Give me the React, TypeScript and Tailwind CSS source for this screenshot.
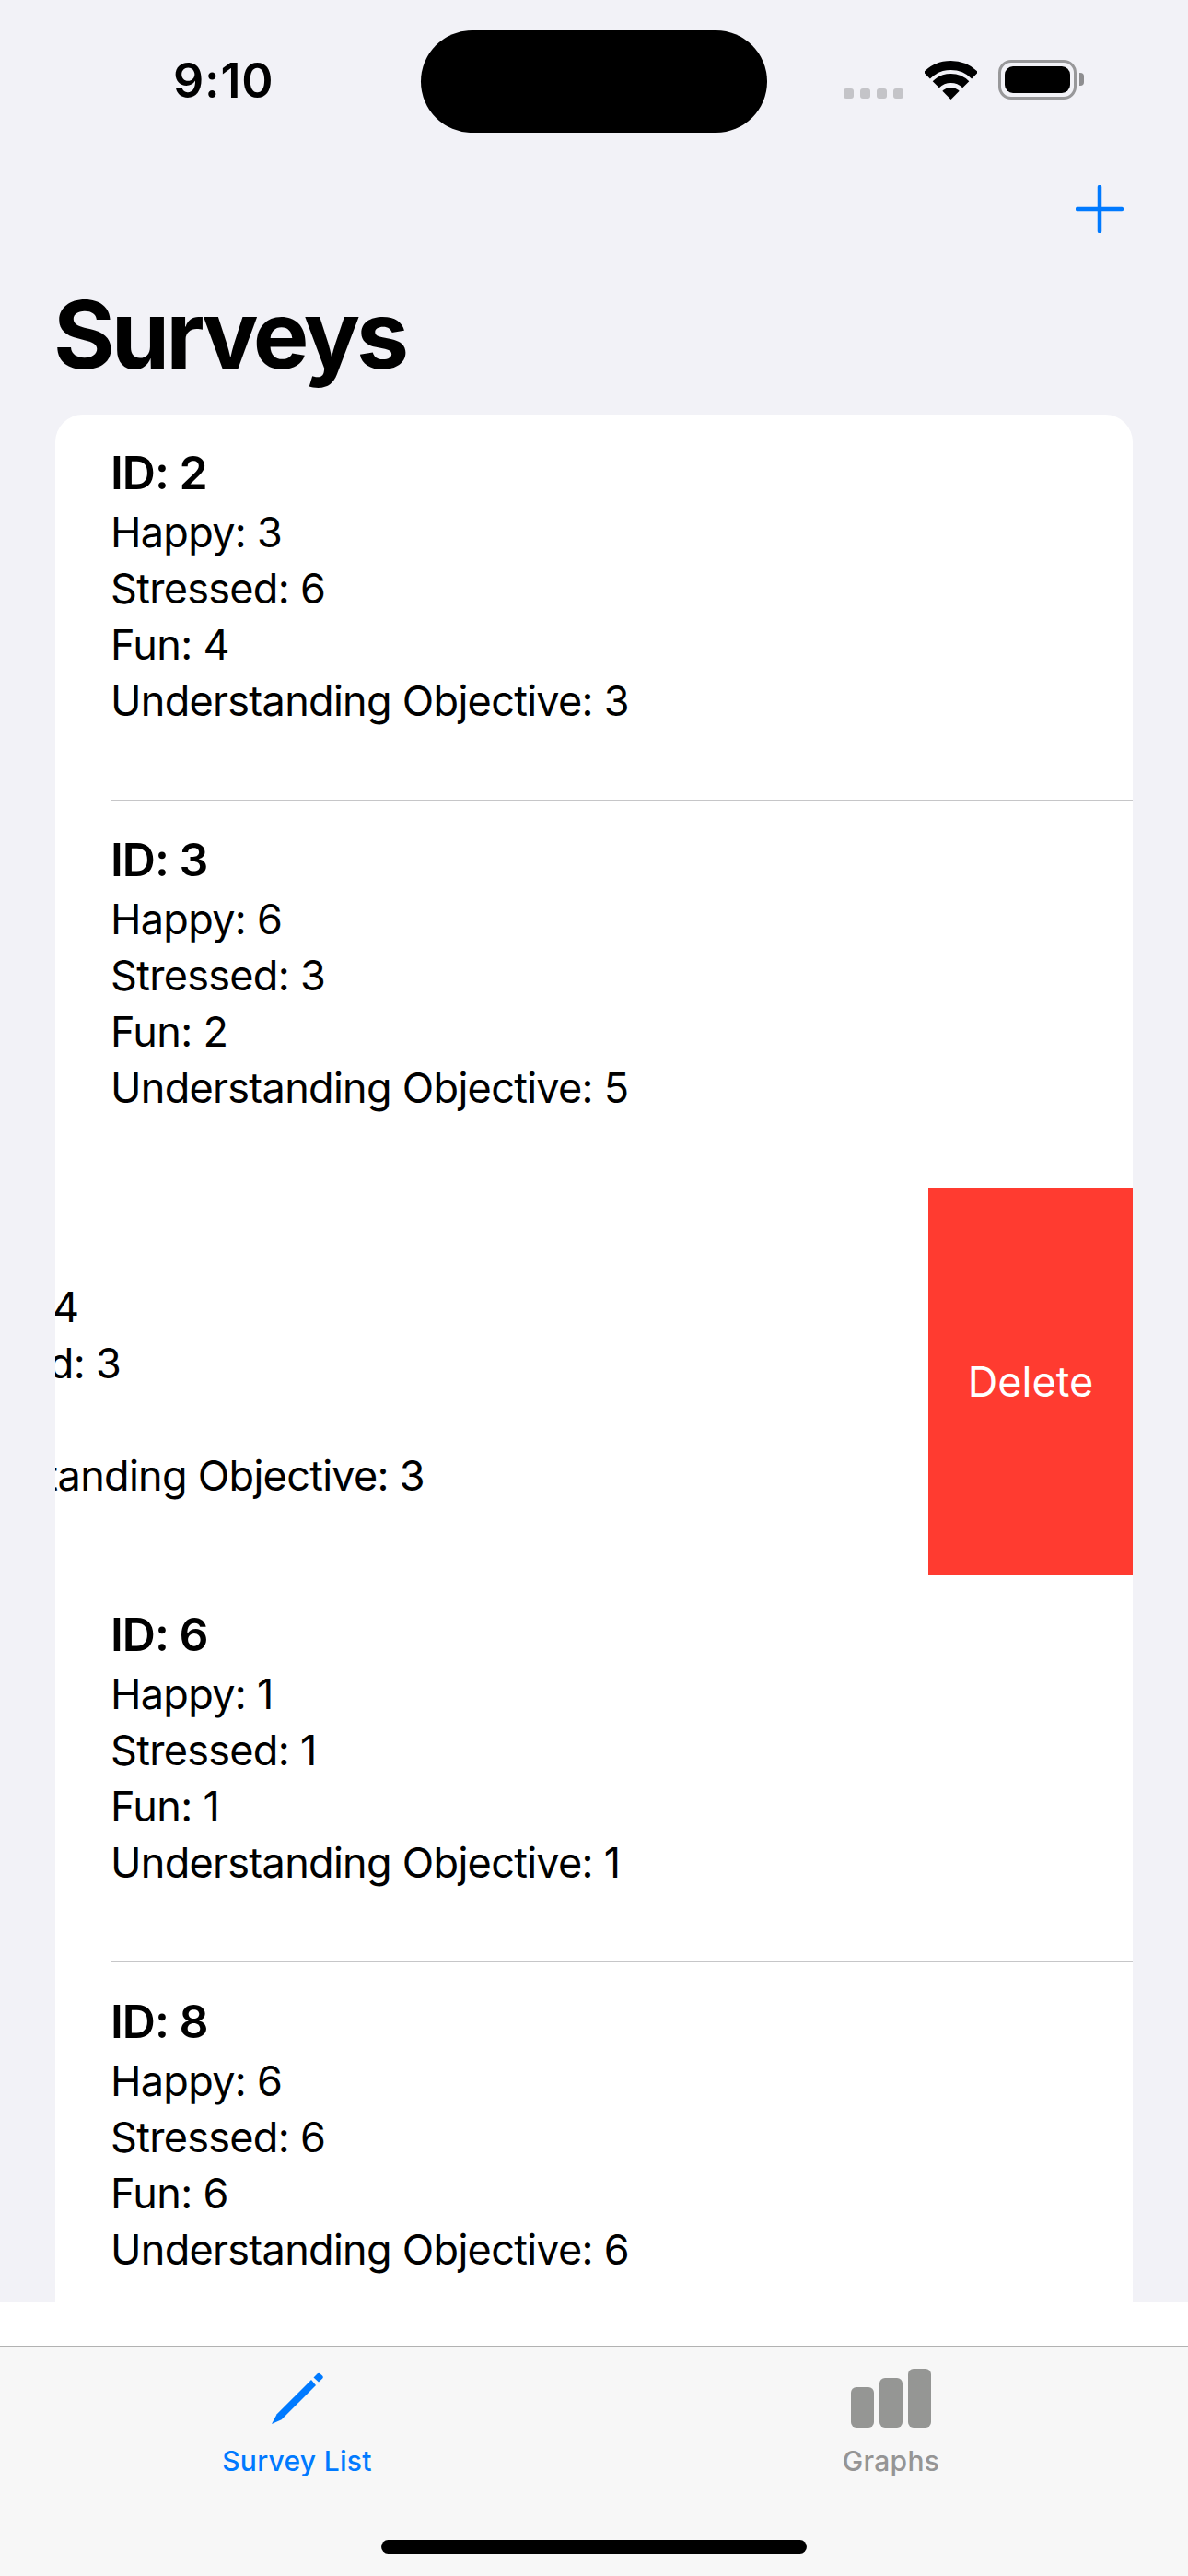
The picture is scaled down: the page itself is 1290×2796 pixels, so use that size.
const sans = "font-['Inter','Liberation_Sans',sans-serif]";

type Survey = {
  id: number;
  happy: number;
  stressed: number;
  fun: number;
  objective: number;
};

const surveys: Survey[] = [
  { id: 2, happy: 3, stressed: 6, fun: 4, objective: 3 },
  { id: 3, happy: 6, stressed: 3, fun: 2, objective: 5 },
  { id: 4, happy: 4, stressed: 3, fun: 3, objective: 3 },
  { id: 6, happy: 1, stressed: 1, fun: 1, objective: 1 },
  { id: 8, happy: 6, stressed: 6, fun: 6, objective: 6 },
];

function StatusBar() {
  return (
    <div className="flex h-[144px] shrink-0 items-start pl-[188px] pt-[33px]">
      <div className="w-[269px] pt-[24px] text-[52px] leading-[62px] font-semibold tracking-[0.8px] text-black">9:10</div>
      <div className="h-[111px] w-[376px] rounded-full bg-black" />
      <div className="ml-[83px] flex h-[75px] items-end">
        <div className="flex gap-[7px] pb-px">
          {[0, 1, 2, 3].map((dot) => (
            <span key={dot} className="h-[11px] w-[11px] rounded-[3px] bg-[#c4c4c8]" />
          ))}
        </div>
        <svg className="ml-[23px]" width="57" height="42" viewBox="0 0 57 42">
          <path d="M2.34 15.84A37 37 0 0 1 54.66 15.84" fill="none" stroke="#000" strokeWidth="10" />
          <path d="M12.24 25.74A23 23 0 0 1 44.76 25.74" fill="none" stroke="#000" strokeWidth="10" />
          <path d="M28.5 42L19.3 32.8A13 13 0 0 1 37.7 32.8Z" fill="#000" />
        </svg>
        <div className="ml-[23px] flex h-[43px] w-[85px] items-center justify-center rounded-[14px] border-[3.5px] border-[#98989a]">
          <div className="h-[29px] w-[71px] rounded-[9px] bg-black" />
        </div>
        <div className="mb-[15px] ml-[3px] h-[14px] w-[5px] rounded-r-[4px] bg-[#8e8e90]" />
      </div>
    </div>
  );
}

function PlusIcon() {
  return (
    <svg width="52" height="52" viewBox="0 0 52 52" fill="none" stroke="#007aff" strokeWidth="4.5" strokeLinecap="round">
      <path d="M26 2V50" />
      <path d="M2 26H50" />
    </svg>
  );
}

function SurveyText({ survey }: { survey: Survey }) {
  return (
    <div className="text-[45px] leading-[61px] tracking-[-0.7px] text-black whitespace-nowrap">
      <div className="text-[50px] leading-[67px] font-semibold tracking-[-1px]">ID: {survey.id}</div>
      <div>Happy: {survey.happy}</div>
      <div>Stressed: {survey.stressed}</div>
      <div>Fun: {survey.fun}</div>
      <div>Understanding Objective: {survey.objective}</div>
    </div>
  );
}

function SurveyRow({ survey, swiped }: { survey: Survey; swiped?: boolean }) {
  if (swiped) {
    return (
      <div className="flex h-[420.3px] shrink-0">
        <div className="flex min-w-0 flex-1 flex-col">
          <div className="flex-1 overflow-hidden pt-[31px]">
            <div className="ml-[-162px]">
              <SurveyText survey={survey} />
            </div>
          </div>
          <div className="ml-[60px] h-px bg-[#c6c6c8]" />
        </div>
        <div className="flex h-[420px] w-[222px] shrink-0 items-center justify-center bg-[#ff3b30] text-[45px] tracking-[0px] text-white">
          Delete
        </div>
      </div>
    );
  }

  return (
    <div className="flex h-[420.3px] shrink-0 flex-col pl-[60px]">
      <div className="flex-1 pt-[31px]">
        <SurveyText survey={survey} />
      </div>
      <div className="h-px bg-[#c6c6c8]" />
    </div>
  );
}

function PencilIcon() {
  return (
    <svg width="56" height="56" viewBox="0 0 56 56" fill="#007aff">
      <path d="M0 56L5.7 45.3L43 8L48 14L10.7 51.3Z" />
      <path d="M45.5 5.5L49.5 1.5Q51 0 52.5 1.2L55 3.6Q56.6 5.2 55 6.8L51 10.5Z" />
    </svg>
  );
}

function GraphIcon() {
  return (
    <div className="flex h-[64px] items-end gap-[6px]">
      <div className="h-[44px] w-[25px] rounded-[6px] bg-[#959694]" />
      <div className="h-[54px] w-[25px] rounded-[6px] bg-[#959694]" />
      <div className="h-[64px] w-[25px] rounded-[6px] bg-[#959694]" />
    </div>
  );
}

function TabBar() {
  return (
    <div className="relative h-[250px] shrink-0 border-t border-[#b2b2b2] bg-[#f7f7f7]">
      <div className="grid grid-cols-2 pt-[24px]">
        <div className="flex flex-col items-center">
          <div className="flex h-[64px] items-center">
            <PencilIcon />
          </div>
          <div className="mt-[18px] text-[30px] leading-[36px] font-medium tracking-[0.3px] text-[#007aff]">Survey List</div>
        </div>
        <div className="flex flex-col items-center">
          <GraphIcon />
          <div className="mt-[18px] text-[30px] leading-[36px] font-medium tracking-[0.3px] text-[#959595]">Graphs</div>
        </div>
      </div>
      <div className="absolute bottom-[24px] left-[414px] h-[15px] w-[462px] rounded-full bg-black" />
    </div>
  );
}

export default function App() {
  return (
    <div className={`flex h-[2796px] w-[1290px] flex-col overflow-hidden bg-white ${sans}`}>
      <div className="flex h-[2499px] shrink-0 flex-col overflow-hidden bg-[#f2f2f7]">
        <StatusBar />
        <div className="flex h-[109px] shrink-0 items-end justify-end pr-[70px]">
          <PlusIcon />
        </div>
        <h1 className="h-[197px] shrink-0 pl-[58px] pt-[48px] text-[102px] leading-[124px] font-bold tracking-[-4px] text-black">Surveys</h1>
        <div className="mx-[60px] flex flex-col overflow-hidden rounded-t-[30px] bg-white">
          <div className="mt-[-1px] flex flex-col">
            {surveys.map((survey) => (
              <SurveyRow key={survey.id} survey={survey} swiped={survey.id === 4} />
            ))}
          </div>
        </div>
      </div>
      <div className="h-[47px] shrink-0 bg-white" />
      <TabBar />
    </div>
  );
}
